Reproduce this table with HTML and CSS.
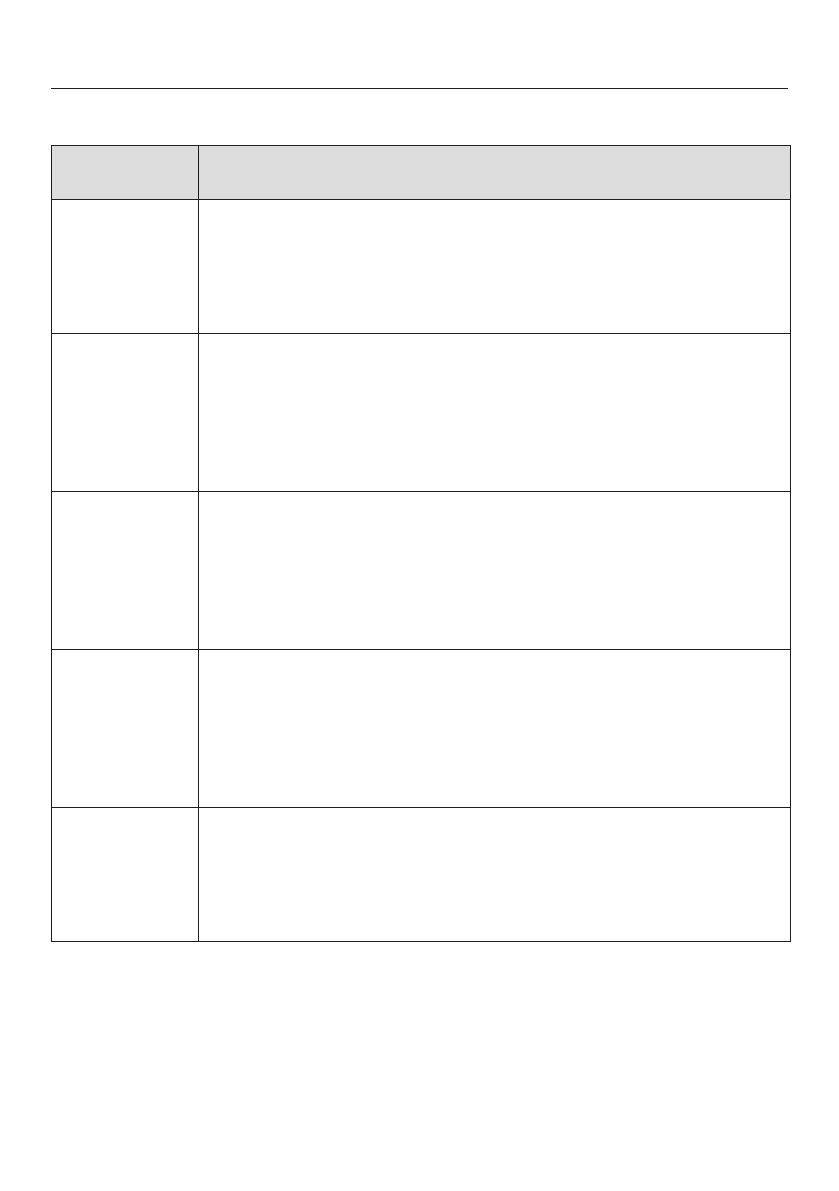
FILE: index.html
```html
<!DOCTYPE html>
<html>
<head>
<meta charset="utf-8">
<link rel="stylesheet" href="styles.css">
</head>
<body>
<div class="page">
  <div class="rule"></div>
  <table class="grid">
    <thead>
      <tr class="head"><th class="c1"></th><th class="c2"></th></tr>
    </thead>
    <tbody>
      <tr class="short"><td></td><td></td></tr>
      <tr class="tall"><td></td><td></td></tr>
      <tr class="tall"><td></td><td></td></tr>
      <tr class="tall"><td></td><td></td></tr>
      <tr class="short"><td></td><td></td></tr>
    </tbody>
  </table>
</div>
</body>
</html>
```
FILE: styles.css
```css
html, body {
  margin: 0;
  padding: 0;
  background: #ffffff;
  font-family: "Liberation Sans", Arial, sans-serif;
}
.page {
  padding: 88px 0 0 51px;
  width: 740px;
}
.rule {
  width: 737px;
  border-top: 1.5px solid #1e1e1e;
  margin-bottom: 56px;
}
.grid {
  border-collapse: collapse;
  width: 740px;
  table-layout: fixed;
}
.grid th, .grid td {
  border: 1.5px solid #1e1e1e;
  padding: 0;
}
.grid .c1 { width: 146px; }
.head th { background: #dcdcdc; height: 53px; }
.short td { height: 133px; }
.tall td { height: 157px; }
```
